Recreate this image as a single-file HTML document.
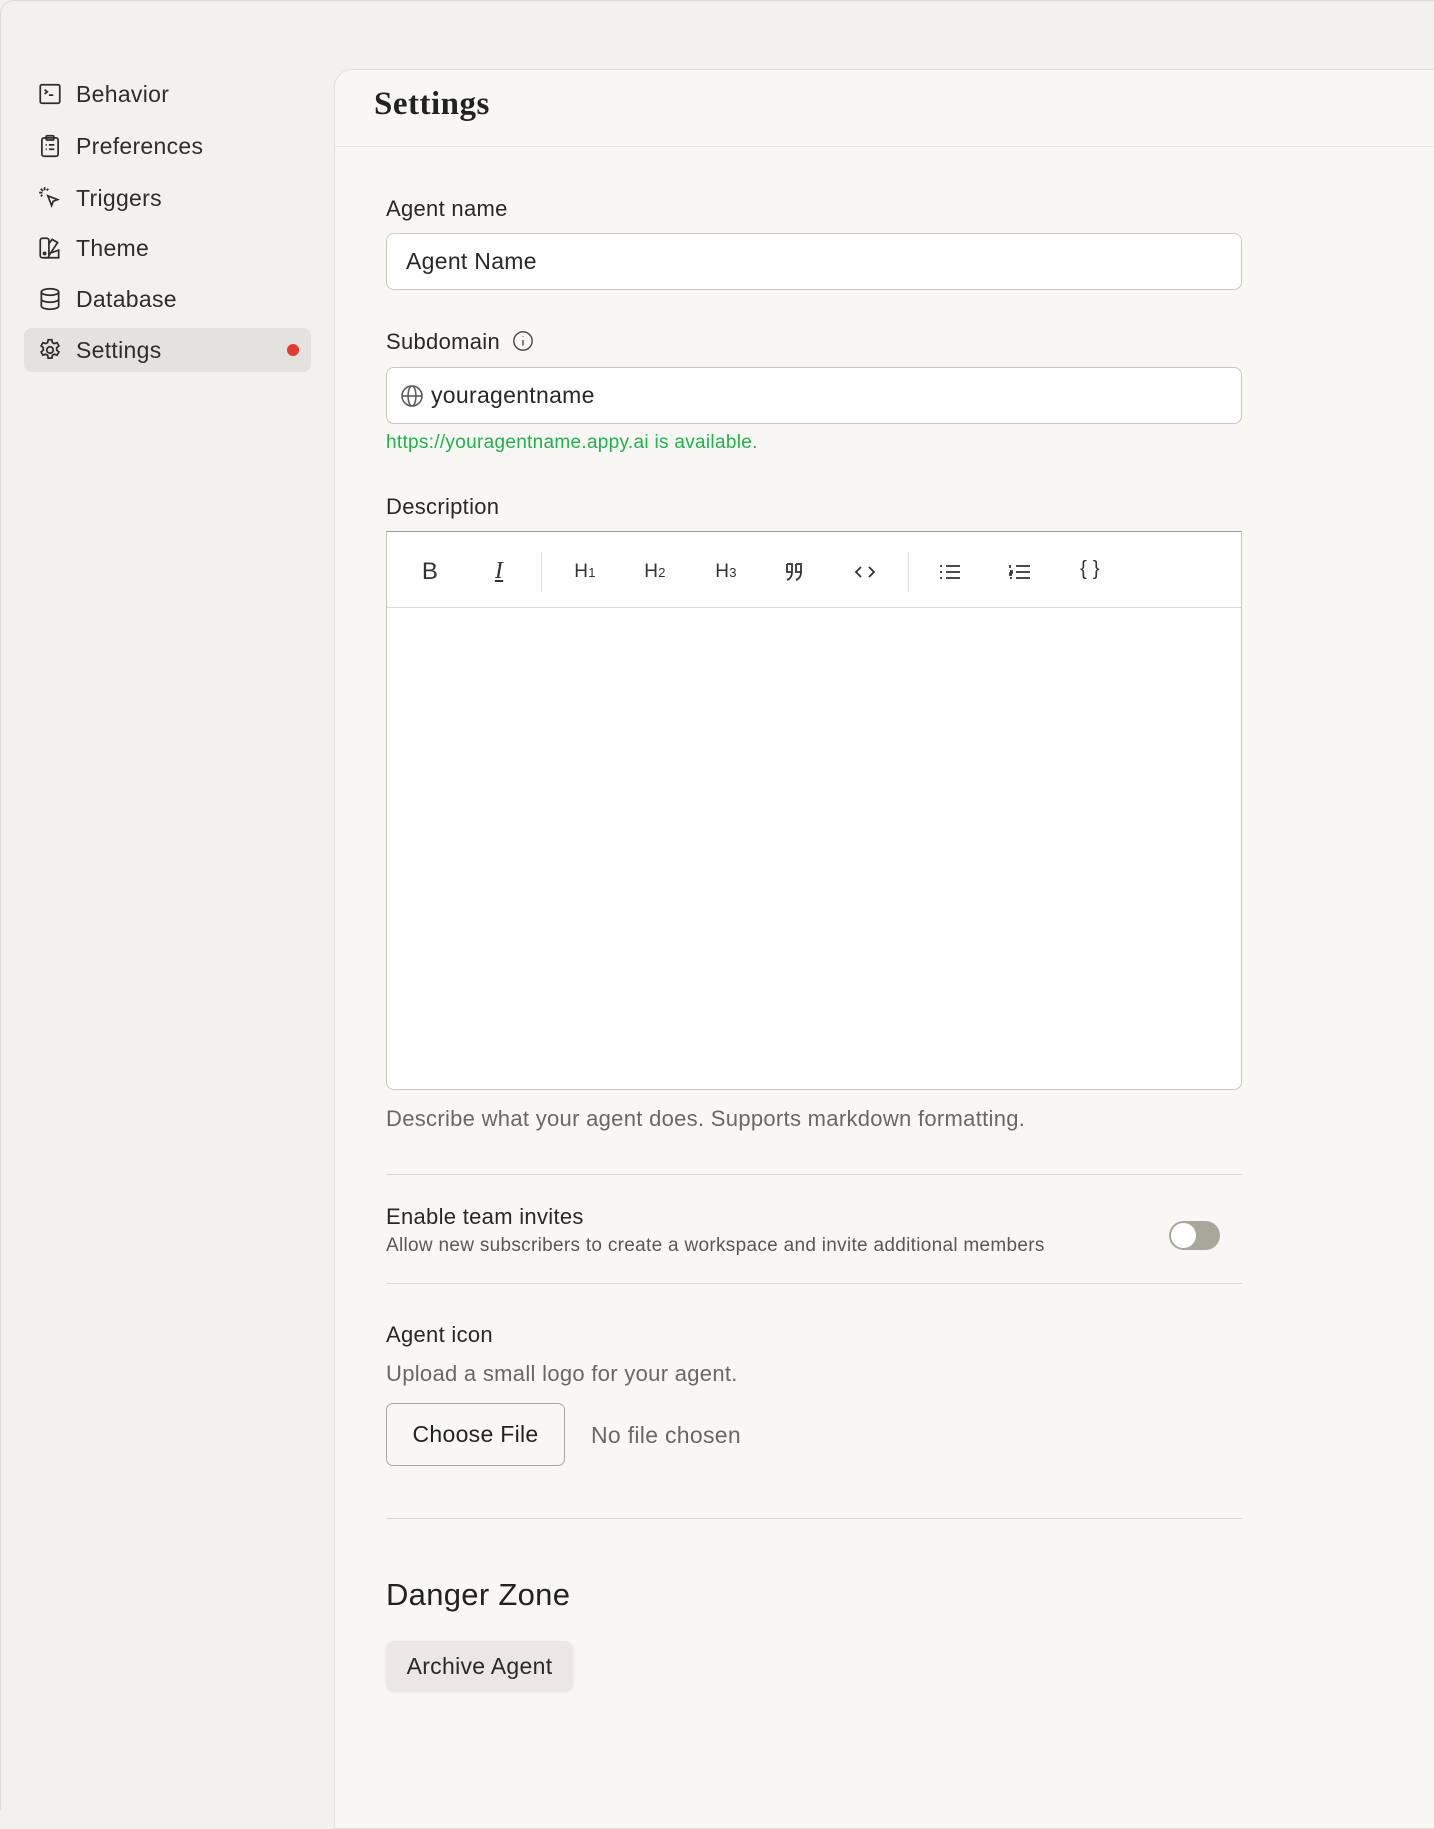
<!DOCTYPE html>
<html><head><style>
*{box-sizing:border-box;margin:0;padding:0}
body{width:1434px;height:1802px;background:#f2f1ed;font-family:"Liberation Sans",sans-serif;color:#2a2826;position:relative;overflow:hidden;letter-spacing:0.3px}
.frame{position:absolute;left:0;top:0;width:1440px;height:1810px;border-left:1px solid #dcdad5;border-top:1px solid #dcdad5;border-top-left-radius:14px}
.nav{position:absolute;left:24px;width:287px;height:44px;display:flex;align-items:center;font-size:23px;color:#2f2d2a}
.nav svg{position:absolute;left:13px;width:26px;height:26px}
.nav span{position:absolute;left:52px}
.active{background:#e4e2de;border-radius:8px}
.dot{position:absolute;right:12px;width:12px;height:12px;border-radius:50%;background:#e53935}
.panel{position:absolute;left:334px;top:69px;width:1120px;height:1760px;background:#f8f7f4;border:1px solid #e0ded9;border-top-left-radius:18px}
.hdr{position:absolute;left:0;top:0;right:0;height:77px;border-bottom:1px solid #e5e4e6}
.hdr h1{position:absolute;left:39px;top:16px;font-family:"Liberation Serif",serif;font-size:33px;font-weight:bold;color:#222;letter-spacing:0.5px}
.a{position:absolute;left:386px}
.lbl{font-size:22px;color:#2a2826}
.inp{width:856px;height:57px;background:#fff;border:1px solid #c9c7c2;border-radius:8px;font-size:23px;display:flex;align-items:center}
.hr{position:absolute;left:386px;width:856px;height:1px;background:#d8d6d1}
.tb{position:absolute;top:0;font-size:19px;color:#333;transform:translateX(-50%)}
</style></head><body>
<div class="frame"></div>

<div class="nav" style="top:72px"><svg viewBox="0 0 24 24" fill="none" stroke="#2f2d2a" stroke-width="1.6"><rect x="3" y="3.5" width="18" height="17" rx="1.5"/><path d="M7 8l2.5 2L7 12M11 13h4"/></svg><span>Behavior</span></div>
<div class="nav" style="top:124px"><svg viewBox="0 0 24 24" fill="none" stroke="#2f2d2a" stroke-width="1.6"><rect x="4.5" y="4.5" width="15" height="17" rx="2"/><rect x="8.5" y="2.5" width="7" height="4" rx="1"/><path d="M8 11h1M11 11h5M8 15h1M11 15h5"/></svg><span>Preferences</span></div>
<div class="nav" style="top:176px"><svg viewBox="0 0 24 24" fill="none" stroke="#2f2d2a" stroke-width="1.6"><path d="M10 10l9 3.5-4 1.5-1.5 4z"/><path d="M7 2v3M2 7h3M3.5 3.5l2 2M10.5 3.5l-1.5 1.5M3.5 10.5l1.5-1.5"/></svg><span>Triggers</span></div>
<div class="nav" style="top:226px"><svg viewBox="0 0 24 24" fill="none" stroke="#2f2d2a" stroke-width="1.6"><rect x="3" y="3" width="8" height="18" rx="2"/><path d="M11 8l3-4 5 3-8 12M11 17l9-3v7H7"/><circle cx="7" cy="17" r="1"/></svg><span>Theme</span></div>
<div class="nav" style="top:277px"><svg viewBox="0 0 24 24" fill="none" stroke="#2f2d2a" stroke-width="1.6"><ellipse cx="12" cy="5.5" rx="8" ry="3"/><path d="M4 5.5v13c0 1.7 3.6 3 8 3s8-1.3 8-3v-13M4 12c0 1.7 3.6 3 8 3s8-1.3 8-3"/></svg><span>Database</span></div>
<div class="nav active" style="top:328px"><svg viewBox="0 0 24 24" fill="none" stroke="#2f2d2a" stroke-width="1.6"><circle cx="12" cy="12" r="3"/><path d="M10.3 2.5h3.4l.5 2.6 1.8 1 2.5-.9 1.7 3-2 1.7v2.2l2 1.7-1.7 3-2.5-.9-1.8 1-.5 2.6h-3.4l-.5-2.6-1.8-1-2.5.9-1.7-3 2-1.7v-2.2l-2-1.7 1.7-3 2.5.9 1.8-1z"/></svg><span>Settings</span><div class="dot"></div></div>

<div class="panel"><div class="hdr"><h1>Settings</h1></div></div>

<div class="a lbl" style="top:196px">Agent name</div>
<div class="a inp" style="top:233px;padding-left:19px">Agent Name</div>

<div class="a lbl" style="top:329px">Subdomain <svg style="vertical-align:-3px;margin-left:6px" width="22" height="22" viewBox="0 0 24 24" fill="none" stroke="#444" stroke-width="1.5"><circle cx="12" cy="12" r="10"/><path d="M12 11v6M12 7v.5"/></svg></div>
<div class="a inp" style="top:367px;padding-left:13px"><svg width="24" height="24" viewBox="0 0 24 24" fill="none" stroke="#555" stroke-width="1.5"><circle cx="12" cy="12" r="10"/><ellipse cx="12" cy="12" rx="4" ry="10"/><path d="M2 12h20"/></svg><span style="margin-left:7px">youragentname</span></div>
<div class="a" style="top:432px;font-size:19px;color:#22b14c">https://youragentname.appy.ai is available.</div>

<div class="a lbl" style="top:494px">Description</div>
<div class="a" style="top:531px;width:856px;height:559px;background:#fff;border:1px solid #c9c7c2;border-top-color:#999;border-radius:0 0 8px 8px">
  <div style="position:absolute;left:0;right:0;top:0;height:76px;border-bottom:1px solid #dcdce0">
    <div style="position:relative;top:26px;height:30px">
      <div class="tb" style="left:43px;font-size:24px">B</div>
      <div class="tb" style="left:112px;font-size:24px;font-style:italic;font-family:'Liberation Serif',serif;text-decoration:underline">I</div>
      <div style="position:absolute;left:154px;top:-6px;width:1px;height:40px;background:#dcdce4"></div>
      <div class="tb" style="left:198px;top:3px">H<small style="font-size:13px">1</small></div>
      <div class="tb" style="left:268px;top:3px">H<small style="font-size:13px">2</small></div>
      <div class="tb" style="left:339px;top:3px">H<small style="font-size:13px">3</small></div>
      <svg style="position:absolute;left:396px;top:2px" width="24" height="24" viewBox="0 0 24 24" fill="none" stroke="#333" stroke-width="1.8"><path d="M4 4h5v8c0 4-2 7-5 8M13 4h5v8c0 4-2 7-5 8M4 4v8h5M13 4v8h5"/></svg>
      <svg style="position:absolute;left:466px;top:4px" width="24" height="20" viewBox="0 0 24 20" fill="none" stroke="#333" stroke-width="1.8"><path d="M8 5l-5 5 5 5M16 5l5 5-5 5"/></svg>
      <div style="position:absolute;left:521px;top:-6px;width:1px;height:40px;background:#dcdce4"></div>
      <svg style="position:absolute;left:551px;top:4px" width="24" height="20" viewBox="0 0 24 20" stroke="#333" stroke-width="1.8"><path d="M8 4h14M8 10h14M8 16h14M2 4h2M2 10h2M2 16h2"/></svg>
      <svg style="position:absolute;left:621px;top:4px" width="24" height="20" viewBox="0 0 24 20" stroke="#333" stroke-width="1.8"><path d="M8 4h14M8 10h14M8 16h14M2 3v3M2 9h2v2H2v2h2M2 16h2"/></svg>
      <div class="tb" style="left:703px;font-size:20px">{ }</div>
    </div>
  </div>
</div>
<div class="a" style="top:1106px;font-size:22px;color:#6a6864">Describe what your agent does. Supports markdown formatting.</div>

<div class="hr" style="top:1174px"></div>
<div class="a lbl" style="top:1204px">Enable team invites</div>
<div class="a" style="top:1235px;font-size:19px;color:#5a5854">Allow new subscribers to create a workspace and invite additional members</div>
<div style="position:absolute;left:1169px;top:1221px;width:51px;height:29px;border-radius:15px;background:#a8a79b"><div style="position:absolute;left:1px;top:1px;width:27px;height:27px;border-radius:50%;background:#fff;border:1px solid #a8a79b"></div></div>
<div class="hr" style="top:1283px"></div>

<div class="a lbl" style="top:1322px">Agent icon</div>
<div class="a" style="top:1361px;font-size:22px;color:#6a6864">Upload a small logo for your agent.</div>
<div class="a" style="top:1403px;width:179px;height:63px;border:1px solid #a9a79f;border-radius:7px;font-size:23px;display:flex;align-items:center;justify-content:center;color:#222">Choose File</div>
<div style="position:absolute;left:591px;top:1422px;font-size:23px;color:#6a6864">No file chosen</div>
<div class="hr" style="top:1518px"></div>

<div class="a" style="top:1577px;font-size:31px;color:#222">Danger Zone</div>
<div class="a" style="top:1641px;width:187px;height:50px;background:#ebe8e3;border-radius:8px;box-shadow:0 1px 3px rgba(0,0,0,.08);font-size:23px;display:flex;align-items:center;justify-content:center;color:#2a2826">Archive Agent</div>
</body></html>
